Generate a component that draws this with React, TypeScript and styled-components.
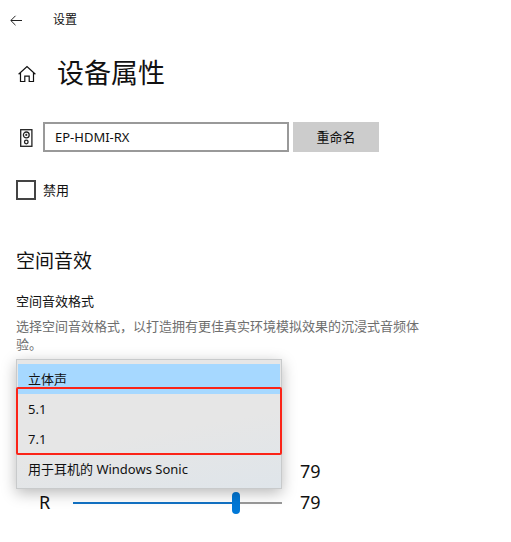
import React, { useState } from "react";
import styled, { createGlobalStyle } from "styled-components";

const GlobalStyle = createGlobalStyle`
  *, *::before, *::after { box-sizing: border-box; }
  body {
    margin: 0;
    background: #fff;
    color: #111;
    font-family: "Noto Sans", "Noto Sans CJK SC", sans-serif;
    font-size: 13px;
    line-height: 18px;
  }
  h1, h2, h3, p, ul { margin: 0; padding: 0; font-weight: 400; }
  button, input { font: inherit; color: inherit; }
`;

const Page = styled.div`
  min-height: 100vh;
  overflow: hidden;
  padding: 0 16px 20px;
`;

const TitleBar = styled.header`
  display: flex;
  align-items: center;
  gap: 30px;
  height: 40px;
  margin-left: -7px;
  font-size: 12px;
`;

const IconButton = styled.button`
  display: flex;
  padding: 0;
  border: 0;
  background: none;
`;

const PageHeading = styled.div`
  display: flex;
  align-items: center;
  gap: 20px;
  height: 66px;
  padding-left: 1px;
`;

const Title = styled.h1`
  font-size: 27px;
  line-height: 36px;
`;

const DeviceForm = styled.form`
  display: grid;
  grid-template-columns: 23px minmax(0, 1fr) 86px;
  align-items: center;
  column-gap: 4px;
  max-width: 363px;
  margin-top: 16px;
`;

const SpeakerSlot = styled.span`
  display: flex;
  padding: 2px 0 0 4px;
`;

const NameInput = styled.input`
  width: 100%;
  height: 30px;
  padding: 0 10px;
  border: 2px solid #999;
  border-radius: 0;
  background: #fff;
  outline: none;
`;

const RenameButton = styled.button`
  height: 30px;
  padding: 0;
  border: 0;
  background: #ccc;
`;

const CheckLabel = styled.label`
  display: flex;
  align-items: center;
  gap: 7px;
  width: max-content;
  margin-top: 28px;
`;

const CheckBox = styled.input`
  appearance: none;
  width: 20px;
  height: 20px;
  margin: 0;
  border: 2px solid #444;
  background: #fff;
  &:checked { background: #0078d7; }
`;

const SectionTitle = styled.h2`
  margin-top: 48px;
  font-size: 19px;
  line-height: 26px;
`;

const FieldTitle = styled.h3`
  margin-top: 18px;
  font-size: 13px;
`;

const Description = styled.p`
  max-width: 412px;
  margin-top: 7px;
  color: #6e6e6e;
`;

const FormatArea = styled.div`
  position: relative;
  max-width: 306px;
  margin-top: 6px;
  padding-top: 97px;
`;

const Popup = styled.div`
  position: absolute;
  z-index: 1;
  inset: 0 40px auto 0;
`;

const Menu = styled.ul`
  padding: 4px 1px;
  border: 1px solid #c8cacb;
  background: linear-gradient(170deg, #e6e6e6 55%, #dfe5ea);
  box-shadow: 0 4px 14px rgba(0, 0, 0, 0.28);
  list-style: none;
`;

const Option = styled.li<{ $selected: boolean }>`
  height: 30px;
  padding: 0 10px;
  background: ${(p) => (p.$selected ? "#a6d8ff" : "transparent")};
  line-height: 30px;
`;

const Marker = styled.div`
  position: absolute;
  inset: 28px 0 auto 0;
  height: 68px;
  border: 2px solid #fb2418;
  border-radius: 2px;
  pointer-events: none;
`;

const ChannelRow = styled.div`
  display: grid;
  grid-template-columns: 34px minmax(0, 1fr) 22px;
  align-items: center;
  height: 31px;
  padding-left: 23px;
  font-size: 18px;
  line-height: 31px;
`;

const Slider = styled.input<{ $level: number }>`
  appearance: none;
  grid-column: 2;
  width: calc(100% - 18px);
  height: 22px;
  margin: 0;
  background: linear-gradient(
      to right,
      #1272c4 ${(p) => p.$level}%,
      #999 ${(p) => p.$level}%
    )
    center / 100% 2px no-repeat;
  &::-webkit-slider-thumb {
    appearance: none;
    width: 8px;
    height: 22px;
    border-radius: 4px;
    background: #0078d7;
  }
`;

const BackIcon = () => (
  <svg width="14" height="12" viewBox="0 0 14 12" fill="none" stroke="#222">
    <path d="M13 6.5H2M6.5 1.8 1.8 6.5l4.7 4.7" />
  </svg>
);

const HomeIcon = () => (
  <svg width="20" height="20" viewBox="0 0 20 20" fill="none" stroke="#111" strokeWidth="1.2">
    <path d="M1.6 11.3 10 3.6l8.4 7.7M3.5 9.8v8.7h4.3v-5.4h4.4v5.4h4.3V9.8" />
  </svg>
);

const SpeakerIcon = () => (
  <svg width="13" height="18" viewBox="0 0 13 18" fill="none" stroke="#222" strokeWidth="1.3">
    <rect x="0.7" y="0.7" width="11.2" height="16.6" />
    <circle cx="6.3" cy="5.9" r="2.9" />
    <circle cx="6.3" cy="5.9" r="0.4" />
    <circle cx="6.3" cy="13" r="1.8" />
  </svg>
);

const formats = ["立体声", "5.1", "7.1", "用于耳机的 Windows Sonic"];

function Channel({ name, caption }: { name: string; caption?: string }) {
  const [level, setLevel] = useState(79);
  const id = `channel-${name}`;
  return (
    <ChannelRow>
      {caption && <label htmlFor={id}>{caption}</label>}
      <Slider
        id={id}
        type="range"
        aria-label={name}
        min={0}
        max={100}
        value={level}
        $level={level}
        onChange={(e) => setLevel(Number(e.target.value))}
      />
      <output htmlFor={id}>{level}</output>
    </ChannelRow>
  );
}

export default function App() {
  const [format, setFormat] = useState(formats[0]);
  const [name, setName] = useState("EP-HDMI-RX");
  return (
    <>
      <GlobalStyle />
      <Page>
        <TitleBar>
          <IconButton type="button" aria-label="返回">
            <BackIcon />
          </IconButton>
          <span>设置</span>
        </TitleBar>
        <main>
          <PageHeading>
            <IconButton type="button" aria-label="主页">
              <HomeIcon />
            </IconButton>
            <Title>设备属性</Title>
          </PageHeading>
          <DeviceForm onSubmit={(e) => e.preventDefault()}>
            <SpeakerSlot>
              <SpeakerIcon />
            </SpeakerSlot>
            <NameInput
              aria-label="设备名称"
              value={name}
              onChange={(e) => setName(e.target.value)}
            />
            <RenameButton type="submit">重命名</RenameButton>
          </DeviceForm>
          <CheckLabel>
            <CheckBox type="checkbox" />
            禁用
          </CheckLabel>
          <SectionTitle>空间音效</SectionTitle>
          <FieldTitle id="format-title">空间音效格式</FieldTitle>
          <Description>
            选择空间音效格式，以打造拥有更佳真实环境模拟效果的沉浸式音频体验。
          </Description>
          <FormatArea>
            <Popup>
              <Menu role="listbox" aria-labelledby="format-title">
                {formats.map((f) => (
                  <Option
                    key={f}
                    role="option"
                    aria-selected={f === format}
                    $selected={f === format}
                    onClick={() => setFormat(f)}
                  >
                    {f}
                  </Option>
                ))}
              </Menu>
              <Marker />
            </Popup>
            <Channel name="左声道" />
            <Channel name="右声道" caption="R" />
          </FormatArea>
        </main>
      </Page>
    </>
  );
}
